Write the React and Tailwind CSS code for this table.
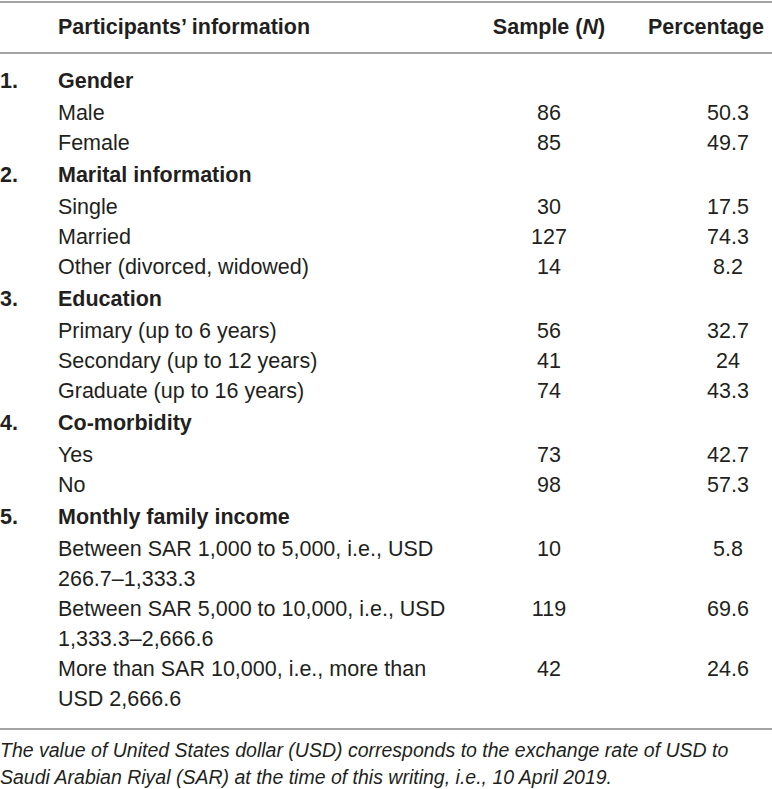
const sections = [
  {
    num: "1.",
    title: "Gender",
    rows: [
      { label: ["Male"], n: "86", pct: "50.3" },
      { label: ["Female"], n: "85", pct: "49.7" },
    ],
  },
  {
    num: "2.",
    title: "Marital information",
    rows: [
      { label: ["Single"], n: "30", pct: "17.5" },
      { label: ["Married"], n: "127", pct: "74.3" },
      { label: ["Other (divorced, widowed)"], n: "14", pct: "8.2" },
    ],
  },
  {
    num: "3.",
    title: "Education",
    rows: [
      { label: ["Primary (up to 6 years)"], n: "56", pct: "32.7" },
      { label: ["Secondary (up to 12 years)"], n: "41", pct: "24" },
      { label: ["Graduate (up to 16 years)"], n: "74", pct: "43.3" },
    ],
  },
  {
    num: "4.",
    title: "Co-morbidity",
    rows: [
      { label: ["Yes"], n: "73", pct: "42.7" },
      { label: ["No"], n: "98", pct: "57.3" },
    ],
  },
  {
    num: "5.",
    title: "Monthly family income",
    rows: [
      { label: ["Between SAR 1,000 to 5,000, i.e., USD", "266.7–1,333.3"], n: "10", pct: "5.8" },
      { label: ["Between SAR 5,000 to 10,000, i.e., USD", "1,333.3–2,666.6"], n: "119", pct: "69.6" },
      { label: ["More than SAR 10,000, i.e., more than", "USD 2,666.6"], n: "42", pct: "24.6" },
    ],
  },
];

const cols = "grid grid-cols-[58px_432px_118px_164px] items-start";

export default function App() {
  return (
    <div className="w-[772px] h-[789px] overflow-hidden bg-white text-[#231f20] font-['Liberation_Sans',Arial,sans-serif]">
      <div className="mt-[1px] border-t-2 border-[#a3a3a3]" />

      {/* header */}
      <div className={`${cols} pt-[9px] pb-[9px] text-[21.5px] leading-[31px] font-bold`}>
        <div />
        <div>Participants’ information</div>
        <div className="text-center">
          Sample (<span className="italic">N</span>)
        </div>
        <div className="pl-[40px]">Percentage</div>
      </div>
      <div className="border-t-2 border-[#a3a3a3]" />

      {/* body */}
      <div className="pt-[10px] pb-[14px] text-[21.5px] leading-[30px]">
        {sections.map((s) => (
          <div key={s.num}>
            <div className={`${cols} py-[2px] font-bold`}>
              <div>{s.num}</div>
              <div>{s.title}</div>
            </div>
            {s.rows.map((r, i) => (
              <div key={i} className={cols}>
                <div />
                <div className="flex flex-col">
                  {r.label.map((l) => (
                    <span key={l}>{l}</span>
                  ))}
                </div>
                <div className="text-center">{r.n}</div>
                <div className="pl-[76px] text-center">{r.pct}</div>
              </div>
            ))}
          </div>
        ))}
      </div>
      <div className="border-t-2 border-[#a3a3a3]" />

      <p className="pt-[7px] text-[19.5px] leading-[27px] italic">
        The value of United States dollar (USD) corresponds to the exchange rate of USD to
        <br />
        Saudi Arabian Riyal (SAR) at the time of this writing, i.e., 10 April 2019.
      </p>
    </div>
  );
}
